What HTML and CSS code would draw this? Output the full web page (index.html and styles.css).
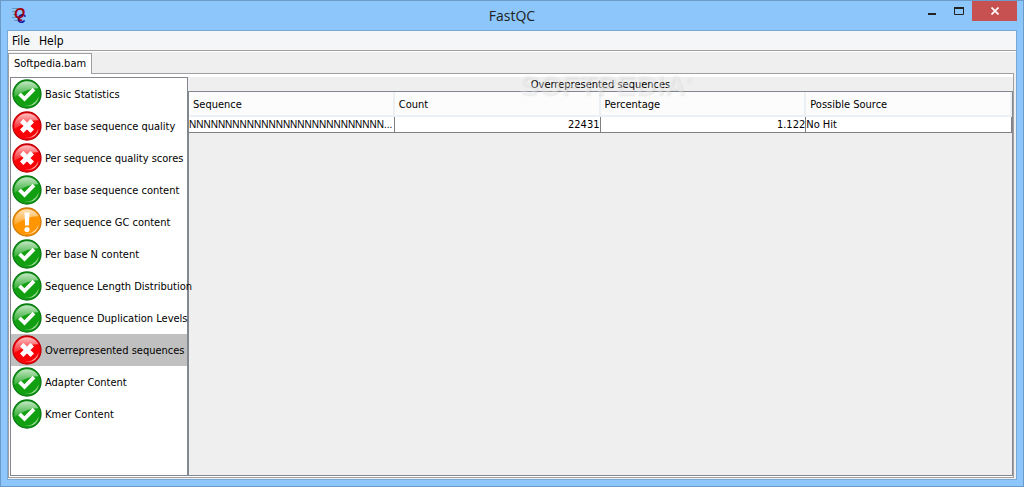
FILE: index.html
```html
<!DOCTYPE html>
<html lang="en">
<head>
    <meta charset="UTF-8">
    <meta name="viewport" content="width=device-width, initial-scale=1.0">
    <title>FastQC</title>
    <link rel="stylesheet" href="styles.css">
</head>
<body>
    <!-- shared status icons -->
    <svg class="defs" width="0" height="0" aria-hidden="true">
        <defs>
            <linearGradient id="gloss" x1="0" y1="0" x2="0" y2="1">
                <stop offset="0" stop-color="#fff" stop-opacity="0.75"/>
                <stop offset="1" stop-color="#fff" stop-opacity="0.12"/>
            </linearGradient>
            <g id="shine">
                <path d="M2.2 16C2.2 8 8 2.2 15 2.2c5.500 0 9.500 3 11.500 7C18 9 11 12.500 2.200 18z" fill="url(#gloss)"/>
                <path d="M13 26.800c6 .3 11.500-3.300 13.500-9.300-.5 6.500-5.500 10.500-13.500 9.300z" fill="#fff" opacity="0.65"/>
            </g>
            <symbol id="pass" viewBox="0 0 30 30">
                <circle cx="15" cy="15" r="14" fill="#12a012" stroke="#0b7a14" stroke-width="1.300"/>
                <use href="#shine"/>
                <path d="M7.500 15l5 4.800 9.500-9.600" fill="none" stroke="#fff" stroke-width="3.800"/>
            </symbol>
            <symbol id="fail" viewBox="0 0 30 30">
                <circle cx="15" cy="15" r="14" fill="#fb0007" stroke="#c00008" stroke-width="1.300"/>
                <use href="#shine"/>
                <path d="M9.700 9.700l10.600 10.600M20.300 9.700L9.700 20.300" fill="none" stroke="#fff" stroke-width="4.800"/>
            </symbol>
            <symbol id="warn" viewBox="0 0 30 30">
                <circle cx="15" cy="15" r="14" fill="#ff9500" stroke="#d07a08" stroke-width="1.300"/>
                <use href="#shine"/>
                <path d="M12.500 5.500h5l-.6 13h-3.800z" fill="#fff"/>
                <circle cx="15" cy="22.500" r="2.600" fill="#fff"/>
            </symbol>
        </defs>
    </svg>

    <div class="window">
        <header class="titlebar">
            <svg class="logo" width="18" height="18" viewBox="0 0 18 18" aria-hidden="true">
                <path d="M1 2.500h6M1 5.500h5M2 8.500h5M1 11.500h6M3 14.500h5" stroke="#5a7fae" opacity="0.7"/>
                <text class="logo-c" x="6" y="17">C</text>
                <text class="logo-q" x="3" y="12">Q</text>
            </svg>
            <h1 class="title">FastQC</h1>
            <div class="controls">
                <button class="control" aria-label="Minimize">
                    <svg width="10" height="10"><path d="M1 8h8" stroke="#222" stroke-width="2"/></svg>
                </button>
                <button class="control" aria-label="Maximize">
                    <svg width="10" height="10"><path d="M0 2h10" stroke="#222" stroke-width="2"/><path d="M.5 2v6.500h9V2" fill="none" stroke="#222"/></svg>
                </button>
                <button class="control close" aria-label="Close">
                    <svg width="8" height="8"><path d="M.5 .5l7 7M7.500 .5l-7 7" stroke="#fff" stroke-width="1.700"/></svg>
                </button>
            </div>
        </header>

        <main class="client">
            <nav class="menubar">
                <button class="menu">File</button>
                <button class="menu">Help</button>
            </nav>
            <div class="tabs" role="tablist">
                <button class="tab" role="tab" aria-selected="true">Softpedia.bam</button>
            </div>
            <div class="pane">
                <ul class="modules">
                    <li><button class="module"><svg class="status"><use href="#pass"/></svg>Basic Statistics</button></li>
                    <li><button class="module"><svg class="status"><use href="#fail"/></svg>Per base sequence quality</button></li>
                    <li><button class="module"><svg class="status"><use href="#fail"/></svg>Per sequence quality scores</button></li>
                    <li><button class="module"><svg class="status"><use href="#pass"/></svg>Per base sequence content</button></li>
                    <li><button class="module"><svg class="status"><use href="#warn"/></svg>Per sequence GC content</button></li>
                    <li><button class="module"><svg class="status"><use href="#pass"/></svg>Per base N content</button></li>
                    <li><button class="module"><svg class="status"><use href="#pass"/></svg>Sequence Length Distribution</button></li>
                    <li><button class="module"><svg class="status"><use href="#pass"/></svg>Sequence Duplication Levels</button></li>
                    <li><button class="module selected"><svg class="status"><use href="#fail"/></svg>Overrepresented sequences</button></li>
                    <li><button class="module"><svg class="status"><use href="#pass"/></svg>Adapter Content</button></li>
                    <li><button class="module"><svg class="status"><use href="#pass"/></svg>Kmer Content</button></li>
                </ul>
                <section class="report">
                    <h2 class="heading">Overrepresented sequences<span class="watermark">SOFTPEDIA<sup>®</sup></span></h2>
                    <div class="scroll">
                        <table class="grid">
                            <thead>
                                <tr>
                                    <th>Sequence</th>
                                    <th>Count</th>
                                    <th>Percentage</th>
                                    <th>Possible Source</th>
                                </tr>
                            </thead>
                            <tbody>
                                <tr>
                                    <td class="seq">NNNNNNNNNNNNNNNNNNNNNNNNNNN...</td>
                                    <td class="num">22431</td>
                                    <td class="num">1.122</td>
                                    <td>No Hit</td>
                                </tr>
                            </tbody>
                        </table>
                    </div>
                </section>
            </div>
        </main>
    </div>
</body>
</html>
```
FILE: styles.css
```css
* { box-sizing: border-box; }
body {
    margin: 0;
    font-family: "DejaVu Sans Condensed", Tahoma, sans-serif;
    font-size: 11px;
    line-height: 14px;
    color: #000;
}
button {
    margin: 0;
    padding: 0;
    border: 0;
    background: none;
    font: inherit;
    color: inherit;
}
.defs { position: absolute; }

/* window frame */
.window {
    display: flex;
    flex-direction: column;
    min-height: 100vh;
    padding: 0 6px 6px;
    background: #8cc6fa;
    border: 1px solid #6b9bc8;
}
.titlebar {
    display: grid;
    grid-template-columns: 1fr auto 1fr;
    height: 29px;
}
.logo { margin: 5px 0 0 4px; overflow: visible; }
.logo-q, .logo-c { font-family: "Liberation Sans", Arial, sans-serif; font-weight: bold; font-style: italic; }
.logo-q { font-size: 14px; fill: #a00010; }
.logo-c { font-size: 12px; fill: #10109c; }
.title {
    margin: 0;
    font-family: "Open Sans", sans-serif;
    font-size: 14px;
    font-weight: normal;
    line-height: 29px;
    color: #222;
}
.controls {
    display: flex;
    justify-content: flex-end;
    height: 20px;
}
.control {
    display: flex;
    align-items: center;
    justify-content: center;
    width: 27px;
}
.close {
    width: 45px;
    background: #c75050;
}

/* client area */
.client {
    flex: 1;
    display: flex;
    flex-direction: column;
    padding-bottom: 1px;
    background: #efefef;
    border: 1px solid #78a8d4;
}
.menubar {
    display: flex;
    gap: 9px;
    height: 20px;
    padding-left: 4px;
    background: #f5f6f7;
    border-bottom: 1px solid #a0a0a0;
    box-shadow: 0 1px #fff;
    font-size: 12px;
}
.tabs {
    display: flex;
    padding-top: 2px;
}
.tab {
    height: 21px;
    margin-bottom: -1px;
    padding: 0 5px;
    background: #fff;
    border: 1px solid #a0a0a0;
    border-bottom: 0;
    z-index: 1;
}
.pane {
    flex: 1;
    display: flex;
    margin-right: 2px;
    padding: 3px 0 1px 1px;
    background: #fff;
    border: 1px solid #a0a0a0;
}

/* module list */
.modules {
    z-index: 1;
    width: 178px;
    margin: 0;
    padding: 0;
    list-style: none;
    background: #fff;
    border: 1px solid #828790;
}
.module {
    display: flex;
    align-items: center;
    gap: 3px;
    width: 100%;
    height: 32px;
    padding: 2px 0 0 1px;
    text-align: left;
    white-space: nowrap;
}
.selected { background: #c0c0c0; }
.status {
    flex: none;
    width: 30px;
    height: 30px;
    margin-bottom: 2px;
}

/* report */
.report {
    flex: 1;
    display: flex;
    flex-direction: column;
    background: #efefef;
}
.heading {
    position: relative;
    height: 14px;
    margin: 0;
    font-size: 11px;
    font-weight: normal;
    line-height: 16px;
    text-align: center;
}
.watermark {
    position: absolute;
    top: 0;
    left: 50%;
    padding-left: 10px;
    transform: translateX(-50%);
    font-family: "Liberation Sans", Arial, sans-serif;
    font-size: 29px;
    font-weight: bold;
    color: rgba(255, 255, 255, 0.35);
    text-shadow: 1px 1px 2px rgba(0, 0, 0, 0.08);
    pointer-events: none;
}
.watermark sup { font-size: 9px; vertical-align: 12px; line-height: 0; }
.scroll {
    flex: 1;
    border: 1px solid #828790;
}
.grid {
    width: 100%;
    table-layout: fixed;
    border-collapse: separate;
    border-spacing: 0;
}
.grid th {
    height: 25px;
    padding: 2px 4px 0;
    background: #fcfcfc;
    border-right: 2px solid #ebf0f5;
    border-bottom: 2px solid #ebf0f5;
    font-weight: normal;
    text-align: left;
}
.grid td {
    height: 16px;
    padding: 0;
    background: #fff;
    border-right: 1px solid #808080;
    border-bottom: 1px solid #808080;
    white-space: nowrap;
    overflow: hidden;
}
.grid .num { text-align: right; }
.grid .seq {
    font-family: "Liberation Sans", Arial, sans-serif;
    font-size: 10px;
}
```
